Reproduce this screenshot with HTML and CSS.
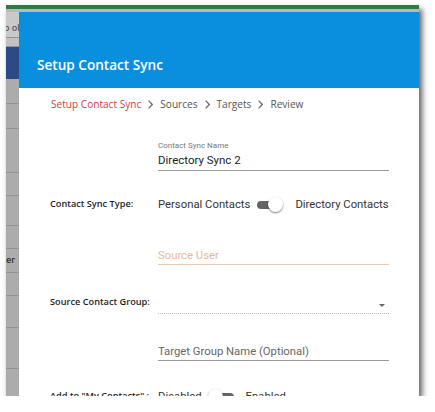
FILE: index.html
```html
<!DOCTYPE html>
<html lang="en">
<head>
<meta charset="utf-8">
<title>Setup Contact Sync</title>
<link rel="stylesheet" href="styles.css">
</head>
<body>
<div class="shot">
  <div class="topbar"></div>
  <div class="topline"></div>
  <div class="main">
    <div class="strip">
      <div class="cell c1"><span class="cut">o ol</span></div>
      <div class="cell c2"></div>
      <div class="cell blue"></div>
      <div class="cell h25"></div>
      <div class="cell h25"></div>
      <div class="cell h44"></div>
      <div class="cell h23"></div>
      <div class="cell h30"></div>
      <div class="cell h23"></div>
      <div class="cell h24"><span class="cut er">er</span></div>
      <div class="cell h23"></div>
      <div class="cell h32"></div>
      <div class="cell h41"></div>
      <div class="cell rest"></div>
    </div>
    <div class="dialog">
      <div class="header"><h1 class="title">Setup Contact Sync</h1></div>
      <nav class="crumbs">
        <span class="crumb active">Setup Contact Sync</span>
        <svg class="chev" width="5" height="9" viewBox="0 0 5 9"><polyline points="0.6,0.6 4.3,4.5 0.6,8.4" fill="none" stroke="#666" stroke-width="1.2"/></svg>
        <span class="crumb">Sources</span>
        <svg class="chev" width="5" height="9" viewBox="0 0 5 9"><polyline points="0.6,0.6 4.3,4.5 0.6,8.4" fill="none" stroke="#666" stroke-width="1.2"/></svg>
        <span class="crumb">Targets</span>
        <svg class="chev" width="5" height="9" viewBox="0 0 5 9"><polyline points="0.6,0.6 4.3,4.5 0.6,8.4" fill="none" stroke="#666" stroke-width="1.2"/></svg>
        <span class="crumb">Review</span>
      </nav>
      <div class="form">
        <div class="row r-name">
          <div class="label"></div>
          <div class="field">
            <div class="float">Contact Sync Name</div>
            <div class="value">Directory Sync 2</div>
          </div>
        </div>
        <div class="row r-type">
          <div class="label">Contact Sync Type:</div>
          <div class="switchline">
            <span class="opt">Personal Contacts</span>
            <span class="toggle on"><span class="knob"></span></span>
            <span class="opt">Directory Contacts</span>
          </div>
        </div>
        <div class="row r-user">
          <div class="label"></div>
          <div class="field warn"><div class="value ph-warn">Source User</div></div>
        </div>
        <div class="row r-group">
          <div class="label">Source Contact Group:</div>
          <div class="select"><span class="arrow"></span></div>
        </div>
        <div class="row r-target">
          <div class="label"></div>
          <div class="field"><div class="value ph">Target Group Name (Optional)</div></div>
        </div>
        <div class="row r-add">
          <div class="label">Add to "My Contacts" :</div>
          <div class="switchline">
            <span class="opt">Disabled</span>
            <span class="toggle off"><span class="knob"></span></span>
            <span class="opt">Enabled</span>
          </div>
        </div>
      </div>
    </div>
  </div>
</div>
</body>
</html>
```
FILE: styles.css
```css
html, body {
  margin: 0;
  padding: 0;
  background: #ffffff;
}

.shot {
  margin: 5px 0 0 6px;
  width: 413px;
  height: 391px;
  display: flex;
  flex-direction: column;
  overflow: hidden;
  box-shadow: 3px 4px 6px rgba(0, 0, 0, 0.65);
  background: #ffffff;
}

.topbar {
  height: 4px;
  background: #2f7a3f;
  flex: none;
}

.topline {
  height: 3px;
  background: #b9b9b9;
  flex: none;
}

.main {
  flex: 1;
  display: flex;
  min-height: 0;
}

/* left background strip */
.strip {
  width: 13px;
  flex: none;
  display: flex;
  flex-direction: column;
  background: #acacac;
  overflow: hidden;
}

.cell {
  flex: none;
  border-bottom: 1px solid #939393;
  position: relative;
  font-family: "Open Sans", sans-serif;
  font-size: 9px;
  color: #333;
  white-space: nowrap;
}

.c1 { height: 25px; background: #c9c9c9; }
.c2 { height: 8px; background: #c2c2c2; }
.blue { height: 32px; background: #2c4a88; border-bottom: none; }
.h25 { height: 24px; }
.h44 { height: 43px; }
.h23 { height: 22px; }
.h30 { height: 29px; }
.h24 { height: 23px; }
.h32 { height: 31px; }
.h41 { height: 40px; }
.rest { flex: 1; border-bottom: none; }

.cut {
  display: block;
  margin-left: -2px;
  line-height: 12px;
  padding-top: 10px;
  font-weight: 600;
  color: #555;
}

.er {
  padding-top: 5px;
  margin-left: 0;
  color: #333;
}

/* dialog */
.dialog {
  flex: 1;
  display: flex;
  flex-direction: column;
  background: #ffffff;
  min-width: 0;
}

.header {
  height: 76px;
  flex: none;
  background: #0a8fdf;
  padding: 43px 0 0 18px;
  box-sizing: border-box;
}

.title {
  margin: 0;
  font-family: "Open Sans", sans-serif;
  font-weight: 600;
  font-size: 13.6px;
  line-height: 20px;
  color: #ffffff;
}

.crumbs {
  margin: 8px 0 0 32px;
  height: 16px;
  display: flex;
  align-items: center;
  gap: 7px;
  font-family: "Open Sans", sans-serif;
  font-size: 10.1px;
  line-height: 16px;
  color: #555555;
}

.crumb.active {
  color: #d83a44;
}

.chev {
  display: block;
  flex: none;
}

.form {
  display: flex;
  flex-direction: column;
  padding-left: 31px;
}

.row {
  display: grid;
  grid-template-columns: 108px 231px;
}

.label {
  font-family: "Open Sans", sans-serif;
  font-weight: 600;
  font-size: 9.2px;
  color: #1e1e1e;
  line-height: 18px;
  white-space: nowrap;
}

.field {
  border-bottom: 1px solid #9a9a9a;
  font-family: Roboto, sans-serif;
}

.field.warn {
  border-bottom-color: #e8cbb6;
}

.float {
  font-size: 8px;
  line-height: 12px;
  color: #777777;
}

.value {
  font-size: 11.5px;
  line-height: 16px;
  color: #222222;
  padding-bottom: 2px;
}

.ph {
  color: #666666;
  font-size: 11.3px;
  padding-bottom: 0;
}

.ph-warn {
  color: #e5b89c;
  font-size: 11.3px;
  padding-bottom: 0;
}

.r-name { margin-top: 28px; }
.r-type { margin-top: 23px; align-items: center; }
.r-user { margin-top: 34px; }
.r-group { margin-top: 28px; }
.r-target { margin-top: 30px; }
.r-add { margin-top: 25px; align-items: center; }

.switchline {
  display: flex;
  align-items: center;
  height: 20px;
  font-family: Roboto, sans-serif;
  font-size: 11.3px;
  color: #333333;
  white-space: nowrap;
}

.toggle {
  position: relative;
  width: 27px;
  height: 15px;
  flex: none;
  margin: 0 11px 0 7px;
}

.toggle::before {
  content: "";
  position: absolute;
  left: 0;
  top: 4px;
  width: 20px;
  height: 8px;
  border-radius: 4px;
  background: #646464;
}

.toggle.off::before {
  left: 6px;
}

.knob {
  position: absolute;
  top: 0;
  width: 15px;
  height: 15px;
  border-radius: 50%;
  background: #ffffff;
  box-shadow: 0 1px 2px rgba(0, 0, 0, 0.5);
}

.toggle.on .knob { left: 11px; }
.toggle.off .knob { left: 0; }

.toggle.off {
  margin-left: 6px;
  margin-right: 12px;
  width: 26px;
}

.select {
  height: 20px;
  border-bottom: 1px dotted #bdbdbd;
  display: flex;
  justify-content: flex-end;
  align-items: center;
}

.arrow {
  width: 0;
  height: 0;
  margin: 4px 4px 0 0;
  border-left: 3px solid transparent;
  border-right: 3px solid transparent;
  border-top: 3px solid #666666;
}
```
